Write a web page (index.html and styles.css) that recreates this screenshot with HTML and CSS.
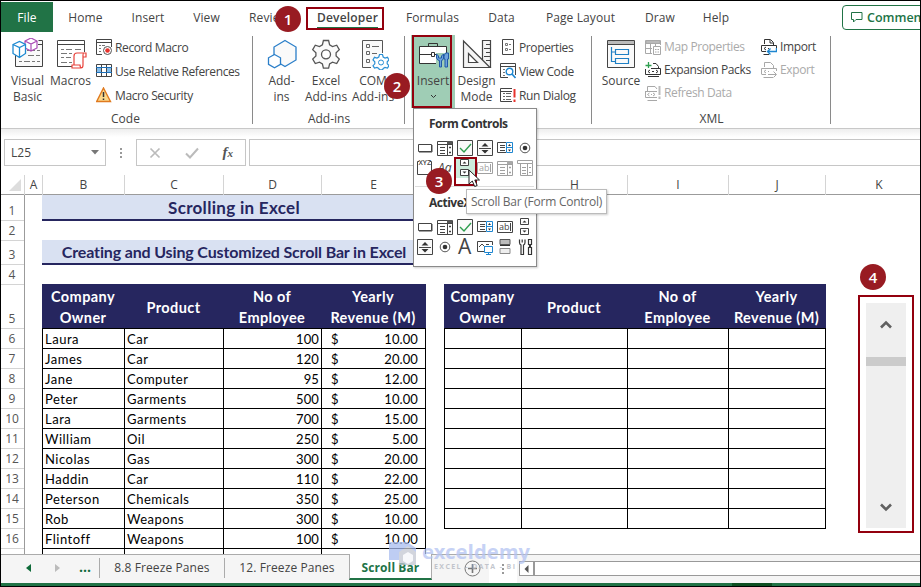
FILE: index.html
```html
<!DOCTYPE html>
<html lang="en">

<head>
    <meta charset="UTF-8">
    <meta name="viewport" content="width=device-width, initial-scale=1.0">
    <title>Scrolling in Excel</title>
    <link rel="stylesheet" href="styles.css">
</head>

<body>
    <div class="window">
        <!-- Ribbon Tabs -->
        <nav class="tabs">
            <span class="tab file">File</span>
            <span class="tab">Home</span>
            <span class="tab">Insert</span>
            <span class="tab">View</span>
            <span class="tab">Review</span>
            <span class="tab active"><b>Developer</b></span>
            <span class="tab">Formulas</span>
            <span class="tab">Data</span>
            <span class="tab">Page Layout</span>
            <span class="tab">Draw</span>
            <span class="tab">Help</span>
            <span class="comments">
                <svg width="12" height="11" viewBox="0 0 12 11"><path d="M1 .5h10v7H5L2.500 10V7.500H.5V.5z" fill="none" stroke="#217346"/></svg>
                Comments
            </span>
        </nav>

        <!-- Ribbon -->
        <div class="ribbon">
            <div class="group code">
                <div class="tools">
                    <div class="big">
                        <svg width="32" height="32" viewBox="0 0 32 32" fill="none">
                            <path d="M3.500 14v14.500h27v-26h-4" stroke="#444" fill="#fafafa"/>
                            <path d="M26 6.500h4" stroke="#444"/>
                            <path d="M15 12.500h3M20 12.500h3M25 12.500h3M16 17.500h6M24 17.500h4M7 23.500h3M12 23.500h6M20 23.500h3M25 23.500h3" stroke="#777"/>
                            <path d="M13 3l6-3 6 3v7l-6 3-6-3zM13 3l6 3 6-3M19 6v7" fill="#fff" stroke="#a94bb5" stroke-width="1.200"/>
                            <path d="M1 6.500l6.500-3 6 3v9l-6 4-6.500-4zM1 6.500l6.500 3 6-3M7.500 9.500v10" fill="#fff" stroke="#1e8ad2" stroke-width="1.300"/>
                        </svg>
                        Visual<br>Basic
                    </div>
                    <div class="big">
                        <svg width="32" height="32" viewBox="0 0 32 32" fill="none">
                            <path d="M17 28.500H2.500v-26h27V14M2.500 6.500h27" stroke="#444"/>
                            <path d="M6 11.500h3M11 11.500h6M20 11.500h6M6 15.500h6M14 15.500h3M6 19.500h3M11 19.500h5M6 24.500h6M14 24.500h3" stroke="#777"/>
                            <path d="M19 27V18q0-3 3-3h9v4h-3v8q0 3-2 3h-9v-3h8q0 3 2 3M28 19v-2q0-2 1-2" stroke="#e8433c" stroke-width="1.200" fill="#fff"/>
                        </svg>
                        Macros
                    </div>
                    <div class="small-col">
                        <div class="small">
                            <svg width="16" height="16" viewBox="0 0 16 16" fill="none"><path d="M6 15.500H.5V.5h15V8M.5 3.500h15" stroke="#444"/><path d="M3 6.500h2M6 6.500h3M3 9.500h2M3 12.500h2" stroke="#777"/><circle cx="11.500" cy="11.500" r="4" stroke="#555" fill="#fff"/><circle cx="11.500" cy="11.500" r="2.300" fill="#e8332c"/></svg>
                            Record Macro
                        </div>
                        <div class="small">
                            <svg width="16" height="16" viewBox="0 0 16 16" fill="none"><path d="M0 4h16v5H0z" fill="#83bdec"/><path d="M5 4h5v5H5z" fill="#fff"/><path d="M.5 1.500h15v12H.5zM5.500 1v13M10.500 1v13" stroke="#444"/><path d="M0 4.500h16M0 9.500h16" stroke="#1e6fb8"/></svg>
                            Use Relative References
                        </div>
                        <div class="small">
                            <svg width="16" height="16" viewBox="0 0 16 16"><path d="M7.500 1L14.500 14.500H.7z" fill="#fbd98b" stroke="#e07a1f" stroke-width="1.400"/><path d="M7.500 5v5M7.500 11.500v1.500" stroke="#333" stroke-width="1.500"/></svg>
                            Macro Security
                        </div>
                    </div>
                </div>
                <div class="label">Code</div>
            </div>

            <div class="group addins">
                <div class="tools">
                    <div class="big">
                        <svg width="32" height="32" viewBox="0 0 32 32" fill="#fafafa" stroke="#2b7fc9" stroke-width="1.300"><path d="M19 2.500l11 6.500v13l-11 6.500L8 22V9z"/><path d="M8.500 16.500l6 3.300v6.500l-6 3.400-6-3.400v-6.500z" fill="#fff"/></svg>
                        Add-<br>ins
                    </div>
                    <div class="big">
                        <svg width="32" height="32" viewBox="0 0 32 32" fill="#fafafa" stroke="#555" stroke-width="1.300"><path d="M13.400 2.500h5.200l1 4.300 2.900 1.700 4.200-1.300 2.600 4.500-3.200 3v3.300l3.200 3-2.600 4.500-4.200-1.300-2.900 1.700-1 4.300h-5.200l-1-4.300-2.900-1.700-4.200 1.300L2.700 21l3.200-3v-3.300l-3.200-3 2.600-4.500 4.200 1.300 2.900-1.700z"/><circle cx="16" cy="16.300" r="4.500" fill="#fff"/></svg>
                        Excel<br>Add-ins
                    </div>
                    <div class="big">
                        <svg width="32" height="32" viewBox="0 0 32 32" fill="none"><path d="M14 29.500H5.500v-27h20V15" stroke="#555" fill="#fafafa"/><path d="M9.500 6.500h3v3h-3zM9.500 13.500h3v3h-3zM9.500 21.500h3v3h-3zM15 8.500h7M15 15.500h5" stroke="#666"/><path d="M22.500 16.500h3l.7 2.500 1.800 1 2.500-.7 1.500 2.600-1.800 1.900v2l1.800 1.900-1.500 2.300-2.500-.6-1.800 1-.7 1.500h-3l-.7-1.500-1.800-1-2.500.6-1.500-2.300 1.800-1.900v-2L16 21.900l1.500-2.600 2.500.7 1.800-1z" stroke="#2b8fd4" stroke-width="1.200" fill="#fff"/><circle cx="24" cy="24.500" r="2.500" stroke="#2b8fd4"/></svg>
                        COM<br>Add-ins
                    </div>
                </div>
                <div class="label">Add-ins</div>
            </div>

            <div class="group controls">
                <div class="tools">
                    <div class="big insert">
                        <svg width="32" height="32" viewBox="0 0 32 32" fill="none"><path d="M11.500 8V5.500h9V8" stroke="#333"/><path d="M2.500 8.500h27v17h-27z" fill="#fff" stroke="#333"/><path d="M3 16.500h26" stroke="#333"/><path d="M14.500 14.500h3v4h-3z" fill="#fff" stroke="#333"/><path d="M19 15h13v15H19z" fill="#9fcdb5"/><path d="M19.500 16v4q1.500 3 3 2.500V29h2v-6.500q2-.5 2-2.500v-4l-2 2v2h-3v-2zM28.500 15h3v6h-1v8h-2.500v-8h-1v-3z" stroke="#2059a8" fill="#6fa3dc"/></svg>
                        Insert
                        <svg class="caret" width="7" height="5" viewBox="0 0 7 5"><path d="M1 1l2.500 2.500L6 1" fill="none" stroke="#333"/></svg>
                    </div>
                    <div class="big design">
                        <svg width="32" height="32" viewBox="0 0 32 32" fill="#f4f4f4" stroke="#444" stroke-width="1.200"><path d="M21.500 2.500h8v27h-8z"/><path d="M25 6.500h4.500M23 10.500h6.500M25 14.500h4.500M23 18.500h6.500M25 22.500h4.500"/><path d="M2.500 3L29 29.500H2.500zM7.500 15.500v9h9z"/></svg>
                        Design<br>Mode
                    </div>
                    <div class="small-col">
                        <div class="small">
                            <svg width="16" height="16" viewBox="0 0 16 16" fill="none"><path d="M2.500.5h11v15h-11z" stroke="#444"/><path d="M5.500 4.500h2v2h-2zM5.500 9.500h2v2h-2zM9 5.500h2M9 10.500h2" stroke="#777"/></svg>
                            Properties
                        </div>
                        <div class="small">
                            <svg width="16" height="16" viewBox="0 0 16 16" fill="none"><path d="M8 14.500H.5V.5h15V12M.5 3.500h15" stroke="#444"/><path d="M3 6.500h2M3 9.500h2M3 12.500h2" stroke="#777"/><circle cx="9.500" cy="8.500" r="3.300" stroke="#1e86d0" stroke-width="1.400" fill="#fff"/><path d="M12 11l3.500 4" stroke="#1e86d0" stroke-width="1.600"/></svg>
                            View Code
                        </div>
                        <div class="small">
                            <svg width="16" height="16" viewBox="0 0 16 16" fill="none"><path d="M12 14.500H.5V1.500H12M.5 4.500H12" stroke="#444"/><path d="M3 6.500h2M6 6.500h5M3 9.500h2M6 9.500h5M3 12.500h2M6 12.500h5" stroke="#666"/><path d="M14.500 2v8.500M14.500 12.500v2.500" stroke="#e8332c" stroke-width="2"/></svg>
                            Run Dialog
                        </div>
                    </div>
                </div>
            </div>

            <div class="group xml">
                <div class="tools">
                    <div class="big">
                        <svg width="32" height="32" viewBox="0 0 32 32" fill="none"><path d="M2.500 2.500h27v27h-27z" stroke="#444" fill="#fafafa"/><path d="M3 3h26v3.500H3z" fill="#bbb"/><path d="M2.500 6.500h27" stroke="#444"/><path d="M10.500 11.500h13v5h-13zM10.500 20.500h13v5h-13zM6.500 9v14.500h4M6.500 14h4" stroke="#1e7fc4" stroke-width="1.200"/></svg>
                        Source
                    </div>
                    <div class="small-col">
                        <div class="small off">
                            <svg width="16" height="16" viewBox="0 0 16 16" fill="none" stroke="#a8a8a8"><path d="M7 14.500H.5V1.500h15V6M.5 4.500h15M5.500 2v12M10.500 2v5M0 9.500h7" /><path d="M1 2h14v2H1z" fill="#ccc"/><path d="M8.500 7.500h7v8h-7zM10 10.500h1.500M10 13h1.500M12.500 10.500H14M12.500 13H14"/></svg>
                            Map Properties
                        </div>
                        <div class="small">
                            <svg width="16" height="16" viewBox="0 0 16 16" fill="none" stroke="#333"><path d="M3.500 0v6M.5 3.500h6" stroke="#2e9e4f" stroke-width="1.300"/><path d="M8 1.500h3l2.500 3V6M.5 7v5.500h15V6.500H6M3 14.500h11"/><path d="M5 8l-2 1.500L5 11M11 8l2 1.500-2 1.500M7 9.500h2"/></svg>
                            Expansion Packs
                        </div>
                        <div class="small off">
                            <svg width="16" height="16" viewBox="0 0 16 16" fill="none" stroke="#a8a8a8"><path d="M2.500 6V1.500H10L12 4M.5 6.500H12M.5 6v6.500H12M2.500 15.500H12M4.500 8l-2 1.500 2 1.500M8 8l2 1.500L8 11M6 9.500h1"/><path d="M14.500 1v9M14.500 11.500V14" stroke-width="2" stroke="#bbb"/></svg>
                            Refresh Data
                        </div>
                    </div>
                    <div class="small-col last">
                        <div class="small">
                            <svg width="16" height="16" viewBox="0 0 16 16" fill="none" stroke="#333"><path d="M3.500 5V.5h6l3 3V6M9 1v3h3M.5 12V6.500h15V9M2.500 15.500H8M.5 12.500H5"/><path d="M5 8L3 9.500 5 11M7 9.500h1"/><path d="M15.500 9v3.500H7M9.500 9.500l-3 3 3 3" stroke="#1e86d0" stroke-width="1.400"/></svg>
                            Import
                        </div>
                        <div class="small off">
                            <svg width="16" height="16" viewBox="0 0 16 16" fill="none" stroke="#a8a8a8"><path d="M3.500 5V.5h6l3 3V6M.5 12V6.500h15V9M2.500 15.500H12M.5 12.500H5M5 8L3 9.500 5 11M7 9.500h1"/><path d="M7 12.500h8M12.500 9.500l3 3-3 3"/></svg>
                            Export
                        </div>
                    </div>
                </div>
                <div class="label">XML</div>
            </div>
        </div>

        <!-- Formula Bar -->
        <div class="formula-bar">
            <div class="name-box">L25 <svg width="8" height="5" viewBox="0 0 8 5"><path d="M0 0h8L4 4.500z" fill="#777"/></svg></div>
            <div class="dots"><i></i><i></i><i></i></div>
            <div class="fx-box">
                <svg width="12" height="12" viewBox="0 0 12 12"><path d="M1.500 1.500l9 9M10.500 1.500l-9 9" stroke="#bbb" stroke-width="1.700"/></svg>
                <svg width="14" height="12" viewBox="0 0 14 12"><path d="M1 6.500l4 4L13 1.500" fill="none" stroke="#bbb" stroke-width="2"/></svg>
                <span class="fx">f<small>x</small></span>
            </div>
            <div class="formula-input"></div>
        </div>

        <!-- Worksheet -->
        <div class="col-heads">
            <span class="corner"><svg width="12" height="12" viewBox="0 0 12 12"><path d="M12 0v12H0z" fill="#ddd"/></svg></span>
            <span>A</span><span>B</span><span>C</span><span>D</span><span>E</span><span>F</span><span>G</span><span>H</span><span>I</span><span>J</span><span>K</span>
        </div>
        <div class="sheet">
            <div class="row-heads">
                <span>1</span><span>2</span><span>3</span><span>4</span><span>5</span><span>6</span><span>7</span><span>8</span><span>9</span><span>10</span><span>11</span><span>12</span><span>13</span><span>14</span><span>15</span><span>16</span><span></span>
            </div>
            <div class="left">
                <div class="title">Scrolling in Excel</div>
                <div class="title sub">Creating and Using Customized Scroll Bar in Excel</div>
                <div class="table source" id="source">
                    <div class="th">Company<br>Owner</div>
                    <div class="th">Product</div>
                    <div class="th">No of<br>Employee</div>
                    <div class="th">Yearly<br>Revenue (M)</div>
                </div>
            </div>
            <div class="table target" id="target">
                <div class="th">Company<br>Owner</div>
                <div class="th">Product</div>
                <div class="th">No of<br>Employee</div>
                <div class="th">Yearly<br>Revenue (M)</div>
            </div>
            <div class="scroll-frame">
                <div class="scroll">
                    <svg width="12" height="9" viewBox="0 0 12 9"><path d="M1 7.500l5-5 5 5" fill="none" stroke="#606060" stroke-width="2.600"/></svg>
                    <div class="thumb"></div>
                    <svg width="12" height="9" viewBox="0 0 12 9"><path d="M1 1.500l5 5 5-5" fill="none" stroke="#606060" stroke-width="2.600"/></svg>
                </div>
            </div>
        </div>

        <!-- Sheet Tabs -->
        <div class="sheet-tabs">
            <div class="nav">
                <svg width="5" height="8" viewBox="0 0 5 8"><path d="M5 0v8L0 4z" fill="#0f6b3a"/></svg>
                <svg width="5" height="8" viewBox="0 0 5 8"><path d="M0 0v8l5-4z" fill="#bbb"/></svg>
                <b>...</b>
            </div>
            <div class="sheet-tab">8.8 Freeze Panes</div>
            <div class="sheet-tab">12. Freeze Panes</div>
            <div class="sheet-tab current">Scroll Bar</div>
            <div class="add"><svg width="17" height="17" viewBox="0 0 17 17"><circle cx="8.500" cy="8.500" r="7.500" fill="none" stroke="#777"/><path d="M8.500 4v9M4 8.500h9" stroke="#777" stroke-width="1.600"/></svg></div>
            <div class="grip"><i></i><i></i><i></i></div>
            <div class="hscroll"><span><svg width="5" height="8" viewBox="0 0 5 8"><path d="M4.500 0v8L.5 4z" fill="#555"/></svg></span></div>
        </div>
        <div class="status"><span></span></div>

        <!-- Insert Menu -->
        <div class="menu">
            <h4>Form Controls</h4>
            <div class="icons">
                <svg><use href="#i-button"/></svg><svg><use href="#i-combo"/></svg><svg><use href="#i-check"/></svg><svg><use href="#i-spin"/></svg><svg><use href="#i-list"/></svg><svg><use href="#i-radio"/></svg>
                <svg><path d="M4 3.500H2.500v13h14v-13H15" fill="none" stroke="#444"/><text x="3.500" y="6.500" class="xyz">XYZ</text></svg><svg><text x="3" y="14" class="aa">Aa</text></svg><svg class="picked"><use href="#i-scroll"/></svg><svg class="grey"><use href="#i-text"/><text x="4" y="13" class="ab">ab</text></svg><svg class="grey"><use href="#i-combo"/></svg><svg class="grey"><use href="#i-drop"/></svg>
            </div>
            <hr>
            <h4>ActiveX Controls</h4>
            <div class="icons activex">
                <svg><use href="#i-button"/></svg><svg><use href="#i-combo"/></svg><svg><use href="#i-check"/></svg><svg><use href="#i-list"/></svg><svg><use href="#i-text"/><text x="4" y="13" class="ab">ab</text></svg><svg><use href="#i-scroll"/></svg>
                <svg><use href="#i-spin"/></svg><svg><use href="#i-radio"/></svg><svg><text x="3" y="17" class="big-a">A</text></svg><svg><use href="#i-image"/></svg><svg><use href="#i-toggle"/></svg><svg><use href="#i-tools"/></svg>
            </div>
        </div>
        <div class="tooltip">Scroll Bar (Form Control)</div>

        <!-- Step Markers -->
        <div class="frame frame-1"></div>
        <div class="frame frame-2"></div>
        <div class="frame frame-3"></div>
        <div class="step step-1">1</div>
        <div class="step step-2">2</div>
        <div class="step step-3">3</div>
        <div class="step step-4">4</div>
        <svg class="cursor" width="13" height="19" viewBox="0 0 13 19"><path d="M1 1v14l3.300-3 2.400 5.500 2.500-1L6.800 11H11.500z" fill="#fff" stroke="#222"/></svg>

        <div class="watermark">
            <svg width="28" height="25" viewBox="0 0 28 25"><path d="M0 0h18l9 6v12H0z" fill="#a9bdf0"/><path d="M10 10l9-6 8 6v13H10z" fill="#c3c8d2"/><path d="M14 13l5-3 5 3v6l-5 3-5-3z" fill="#f5f6fa"/></svg>
            <div>
                <p>exceldemy</p>
                <small>EXCEL - DATA - BI</small>
            </div>
        </div>
    </div>

    <!-- Control Icons -->
    <svg class="defs">
        <symbol id="i-button" viewBox="0 0 20 20"><path d="M3.500 6.500h13v7h-13z" fill="#fff" stroke="#444"/><path d="M4 14h13V7" fill="none" stroke="#444"/></symbol>
        <symbol id="i-combo" viewBox="0 0 20 20"><path d="M2.500 3.500h15v14h-15zM12.500 3v14M3 6.500h14" fill="none" stroke="#444"/><path d="M5 9.500h5M5 12.500h5M5 15.500h5M14 9.500h2M14 14.500h2M15 8.500v2M15 13.500v2" stroke="#444"/><path d="M12 3h5v3h-5z" fill="#555"/></symbol>
        <symbol id="i-check" viewBox="0 0 20 20"><path d="M2.500 2.500h15v15h-15z" fill="#fafafa" stroke="#444"/><path d="M5 10l4 4 7-8" fill="none" stroke="#2e9e4f" stroke-width="1.400"/></symbol>
        <symbol id="i-spin" viewBox="0 0 20 20"><path d="M2.500 2.500h15v15h-15zM4 10.500h12" fill="#fafafa" stroke="#444"/><path d="M6.500 8.500L10 5l3.500 3.500zM6.500 12L10 15.500l3.500-3.500z" fill="#333"/></symbol>
        <symbol id="i-list" viewBox="0 0 20 20"><path d="M11 4.500H2.500v10H11M5 7.500h5M5 9.500h5M5 12.500h5" fill="none" stroke="#444"/><path d="M11.500 4.500h6v10h-6zM11.500 9.500h6" fill="#fff" stroke="#1e86d0"/><path d="M13 8l1.500-2L16 8zM13 11.500l1.500 2 1.500-2z" fill="#333"/></symbol>
        <symbol id="i-radio" viewBox="0 0 20 20"><circle cx="10" cy="10" r="4.800" fill="none" stroke="#555"/><circle cx="10" cy="10" r="2.300" fill="#333"/></symbol>
        <symbol id="i-scroll" viewBox="0 0 20 20"><path d="M5.500 1.500h8v6h-8zM5.500 11.500h8v6h-8z" fill="#fff" stroke="#444"/><path d="M7.500 5.500l2-2 2 2zM7.500 13.500l2 2 2-2z" fill="#333"/></symbol>
        <symbol id="i-text" viewBox="0 0 20 20"><path d="M2.500 4.500h15v11h-15z" fill="none" stroke="#444"/><path d="M15.500 6v8" stroke="#444"/></symbol>
        <symbol id="i-drop" viewBox="0 0 20 20"><path d="M2.500 2.500h15v3h-15zM5.500 5.500v12h12v-12M12.500 6v12M7 9.500h4M7 12.500h4M7 15.500h4M14 9.500h2M14 14.500h2" fill="none" stroke="#444"/></symbol>
        <symbol id="i-image" viewBox="0 0 20 20"><path d="M9 14.500H2.500v-10h15V8M4 10l3-3 3 3M11 7.500h3" fill="none" stroke="#444"/><path d="M9.500 9.500h8v6h-8zM13.500 15.500v2M11 17.500h5" fill="#fff" stroke="#1e86d0"/></symbol>
        <symbol id="i-toggle" viewBox="0 0 20 20"><path d="M5 2.500h10v5H5z" fill="#bbb" stroke="#555"/><path d="M5 8.500h10" stroke="#333"/><path d="M5 11.500h10v5H5z" fill="#eee" stroke="#888"/></symbol>
        <symbol id="i-tools" viewBox="0 0 20 20"><path d="M4.500 2.500v3q0 2 1.500 2.500v9.500h2.500V8Q10 7.500 10 5.500v-3M7.200 2.500v3M13.500 2.500h3v5h-3zM14.500 7.500v3h1v-3M13.500 10.500h3v7h-3z" fill="none" stroke="#333" stroke-width="1.200"/></symbol>
    </svg>

    <script>
        const rows = [
            ["Laura", "Car", "100", "10.00"],
            ["James", "Car", "120", "20.00"],
            ["Jane", "Computer", "95", "12.00"],
            ["Peter", "Garments", "500", "10.00"],
            ["Lara", "Garments", "700", "15.00"],
            ["William", "Oil", "250", "5.00"],
            ["Nicolas", "Gas", "300", "20.00"],
            ["Haddin", "Car", "110", "22.00"],
            ["Peterson", "Chemicals", "350", "25.00"],
            ["Rob", "Weapons", "300", "10.00"],
            ["Flintoff", "Weapons", "100", "10.00"],
            ["", "", "", ""]
        ];

        // Fill the source table
        document.getElementById("source").insertAdjacentHTML("beforeend", rows.map(([owner, product, count, revenue]) =>
            `<div class="td">${owner}</div><div class="td">${product}</div><div class="td num">${count}</div><div class="td money">${revenue ? `<span>$</span><span>${revenue}</span>` : ""}</div>`
        ).join(""));

        // Empty rows of the scrolling table
        document.getElementById("target").insertAdjacentHTML("beforeend", '<div class="td"></div>'.repeat(40));
    </script>
</body>

</html>
```
FILE: styles.css
```css
/* General Styles */
* {
    margin: 0;
    padding: 0;
    box-sizing: border-box;
}

body {
    font-family: "Open Sans", "Noto Sans", sans-serif;
    font-size: 12px;
    color: #444;
    background: #fff;
    overflow: hidden;
}

svg {
    flex: none;
    display: block;
}

.defs {
    position: absolute;
    width: 0;
    height: 0;
}

.window {
    position: relative;
    display: flex;
    flex-direction: column;
    width: 921px;
    height: 587px;
    border: 1px solid #000;
    overflow: hidden;
}

/* Ribbon Tabs */
.tabs {
    display: grid;
    grid-template-columns: 52px 65px 60px 57px 68px 89px 81px 57px 101px 58px 54px 1fr;
    flex: none;
    height: 32px;
    padding-top: 1px;
}

.tab {
    height: 30px;
    line-height: 31px;
    text-align: center;
    white-space: nowrap;
    letter-spacing: 0.1px;
}

.file {
    background: #217346;
    color: #fff;
}

.active b {
    display: inline-block;
    height: 27px;
    font-weight: 600;
    border-bottom: 2px solid #217346;
    letter-spacing: 0.2px;
}

.comments {
    display: flex;
    align-items: center;
    gap: 4px;
    width: 100px;
    height: 25px;
    margin: 3px 0 0 99px;
    padding-left: 8px;
    border: 1px solid #217346;
    border-radius: 4px;
    color: #217346;
    font-weight: 600;
    font-size: 12.5px;
}

/* Ribbon */
.ribbon {
    display: flex;
    flex: none;
    height: 96px;
    border-bottom: 1px solid #c8c8c8;
}

.group {
    position: relative;
    display: flex;
    flex-direction: column;
    padding-top: 2px;
}

.group::after {
    content: "";
    position: absolute;
    right: 0;
    top: 3px;
    width: 1px;
    height: 88px;
    background: #8a8a8a;
}

.code {
    width: 252px;
}

.addins {
    width: 152px;
}

.controls {
    width: 187px;
}

.xml {
    width: 239px;
}

.tools {
    display: flex;
    height: 76px;
}

.code .tools {
    padding-left: 5px;
}

.addins .tools {
    padding-left: 7px;
}

.controls .tools {
    padding-left: 6px;
}

.xml .tools {
    padding-left: 6px;
}

.big {
    display: flex;
    flex: none;
    flex-direction: column;
    align-items: center;
    width: 43px;
    padding-top: 3px;
    line-height: 16px;
    text-align: center;
    white-space: nowrap;
}

.big svg {
    margin-bottom: 3px;
}

.addins .big + .big {
    width: 46px;
}

.addins .big + .big + .big {
    width: 48px;
}

.insert {
    width: 44px;
    height: 73px;
    background: #9fcdb5;
}

.big .caret {
    margin: 5px 0 0;
}

.xml .big {
    width: 46px;
}

.small-col {
    padding-left: 4px;
}

.controls .small-col {
    padding-left: 2px;
}

.xml .small-col {
    width: 116px;
    padding-left: 1px;
}

.xml .small-col.last {
    width: auto;
}

.small {
    display: flex;
    align-items: center;
    gap: 3px;
    height: 24px;
    white-space: nowrap;
    letter-spacing: -0.38px;
}

.xml .small {
    height: 23px;
}

.off {
    color: #aaa;
}

.label {
    line-height: 18px;
    text-align: center;
}

.code .label {
    padding-right: 3px;
}

/* Formula Bar */
.formula-bar {
    display: flex;
    flex: none;
    height: 46px;
    padding: 10px 0 9px 3px;
    background: linear-gradient(#eee, #fff 8px);
}

.name-box,
.fx-box,
.formula-input {
    display: flex;
    align-items: center;
    border: 1px solid #c6c6c6;
}

.name-box {
    justify-content: space-between;
    width: 102px;
    padding: 0 6px;
}

.dots {
    display: flex;
    flex-direction: column;
    align-items: center;
    justify-content: center;
    gap: 2px;
    width: 30px;
}

.dots i,
.grip i {
    width: 2px;
    height: 2px;
    background: #999;
}

.fx-box {
    justify-content: space-between;
    width: 110px;
    padding: 0 12px;
}

.fx {
    font: italic bold 15px "Liberation Serif", serif;
    color: #555;
}

.fx small {
    font-size: 11px;
}

.formula-input {
    flex: 1;
    margin-left: 3px;
    border-right: 0;
}

/* Worksheet */
.col-heads {
    display: grid;
    grid-template-columns: 24px 18px 82px 99px 98px 104px 19px 77px 106px 101px 97px 1fr;
    flex: none;
    height: 20px;
    border-bottom: 1px solid #9b9b9b;
    font-size: 12px;
    line-height: 20px;
    text-align: center;
}

.col-heads span {
    border-right: 1px solid #d4d4d4;
}

.col-heads span:last-child {
    border-right: 0;
    padding-left: 12px;
}

.corner {
    padding: 4px 0 0 8px;
}

.sheet {
    display: flex;
    height: 359px;
    overflow: hidden;
    font-family: Lato, "Open Sans", sans-serif;
    font-size: 13px;
    color: #000;
}

.row-heads {
    display: grid;
    grid-template-rows: 26px 20px 24px 20px 44px repeat(12, 20px);
    width: 24px;
    border-right: 1px solid #9b9b9b;
    font: 12px "Open Sans", sans-serif;
    color: #555;
}

.row-heads span {
    display: flex;
    align-items: flex-end;
    justify-content: center;
    padding-right: 1px;
    line-height: 18px;
    border-bottom: 1px solid #d4d4d4;
}

.left {
    width: 384px;
    margin-left: 17px;
}

.title {
    height: 26px;
    line-height: 25px;
    background: #d9e1f2;
    border-bottom: 2px solid #26265f;
    color: #26265f;
    font-size: 17px;
    font-weight: bold;
    letter-spacing: 0.3px;
    text-align: center;
    white-space: nowrap;
}

.sub {
    height: 25px;
    margin: 19px 0;
    line-height: 24px;
    font-size: 16px;
    letter-spacing: -0.15px;
}

.table {
    display: grid;
    align-content: start;
    border-right: 1px solid #000;
}

.source {
    grid-template-columns: 82px 99px 98px 104px;
}

.target {
    grid-template-columns: 77px 106px 101px 97px;
    width: 382px;
    height: 245px;
    margin: 89px 0 0 18px;
    border-bottom: 1px solid #000;
}

.th {
    display: flex;
    align-items: center;
    justify-content: center;
    height: 44px;
    padding-top: 2px;
    background: #26265f;
    color: #fff;
    font-size: 14.5px;
    font-weight: bold;
    letter-spacing: 0.4px;
    line-height: 21px;
    text-align: center;
    white-space: nowrap;
    box-shadow: 1px 0 #26265f;
}

.td {
    height: 20px;
    padding: 0 2px;
    line-height: 20px;
    border-left: 1px solid #000;
    border-top: 1px solid #000;
    letter-spacing: 0.5px;
}

.num,
.money {
    letter-spacing: 0.1px;
}

.num {
    text-align: right;
}

.money {
    display: flex;
    justify-content: space-between;
    padding: 0 7px 0 9px;
}

/* Scroll Bar Control */
.scroll-frame {
    width: 56px;
    height: 238px;
    margin: 100px 0 0 32px;
    padding: 6px;
    border: 2px solid #93000e;
}

.scroll {
    display: flex;
    flex-direction: column;
    align-items: center;
    width: 40px;
    height: 225px;
    padding: 17px 0 16px;
    background: #efefef;
}

.thumb {
    width: 40px;
    height: 9px;
    margin: 28px 0 auto;
    background: #cbcbcb;
}

/* Sheet Tabs */
.sheet-tabs {
    display: flex;
    flex: none;
    height: 29px;
    background: #f5f5f5;
    border-top: 1px solid #ababab;
}

.nav {
    display: flex;
    align-items: center;
    width: 99px;
    padding-left: 25px;
    border-right: 1px solid #ababab;
    margin: 3px 0 5px;
}

.nav svg + svg {
    margin-left: 24px;
}

.nav b {
    margin: -4px 0 0 19px;
    color: #0f6b3a;
    font-size: 14px;
}

.sheet-tab {
    width: 125px;
    margin: 3px 0 5px;
    line-height: 20px;
    text-align: center;
    border-right: 1px solid #ababab;
    white-space: nowrap;
    letter-spacing: 0.1px;
}

.sheet-tab + .sheet-tab {
    width: 124px;
    border-right: 0;
}

.sheet-tab.current {
    width: 83px;
    margin: -1px 0 3px;
    padding-top: 4px;
    background: #fff;
    border-left: 1px solid #ababab;
    border-right: 1px solid #ababab;
    border-bottom: 2px solid #217346;
    color: #217346;
    font-weight: bold;
}

.sheet-tabs .sheet-tab.current {
    width: 83px;
}

.add {
    width: 57px;
    padding: 5px 0 0 32px;
}

.grip {
    display: flex;
    flex-direction: column;
    align-items: center;
    justify-content: center;
    gap: 2px;
    width: 28px;
    background: #fff;
}

.hscroll {
    flex: 1;
    height: 15px;
    margin: 6px 0 0 2px;
    background: #fff;
    border: 1px solid #999;
    border-right: 0;
}

.hscroll span {
    display: block;
    width: 15px;
    height: 13px;
    padding: 3px 0 0 4px;
    border-right: 2px solid #999;
}

.status {
    flex: none;
    height: 3px;
    padding-left: 731px;
    background: #217346;
}

.status span {
    display: block;
    width: 40px;
    height: 3px;
    background: #0e4f22;
}

/* Insert Menu */
.menu {
    position: absolute;
    left: 412px;
    top: 107px;
    width: 124px;
    height: 159px;
    padding: 6px 0 0 1px;
    background: #fff;
    border: 1px solid #8a8a8a;
    box-shadow: 1px 1px 2px rgba(0, 0, 0, 0.2);
}

.menu h4 {
    padding-left: 14px;
    font-size: 12px;
    line-height: 18px;
    color: #333;
    letter-spacing: -0.5px;
}

.menu hr {
    height: 1px;
    margin: 8px 2px 7px 0;
    border: 0;
    background: #ddd;
}

.icons {
    display: grid;
    grid-template-columns: repeat(6, 20px);
    padding-top: 5px;
}

.icons svg {
    width: 20px;
    height: 20px;
}

.icons .picked {
    background: #cdebdc;
}

.grey {
    opacity: 0.5;
}

.icons text {
    fill: #444;
}

.aa {
    font: italic 12px "Open Sans", sans-serif;
}

.big-a {
    font: 21px "Open Sans", sans-serif;
}

.xyz {
    font: 600 7px "Open Sans", sans-serif;
}

.ab {
    font: 9px "Open Sans", sans-serif;
}

.tooltip {
    position: absolute;
    left: 465px;
    top: 188px;
    width: 141px;
    height: 25px;
    background: #fff;
    border: 1px solid #bbb;
    box-shadow: 1px 1px 2px rgba(0, 0, 0, 0.2);
    color: #666;
    line-height: 23px;
    text-align: center;
    white-space: nowrap;
    letter-spacing: -0.25px;
}

/* Step Markers */
.frame {
    position: absolute;
    border: 2px solid #93000e;
}

.frame-1 {
    left: 305px;
    top: 6px;
    width: 78px;
    height: 23px;
}

.frame-2 {
    left: 411px;
    top: 34px;
    width: 40px;
    height: 73px;
}

.frame-3 {
    left: 453px;
    top: 156px;
    width: 23px;
    height: 29px;
}

.step {
    position: absolute;
    width: 26px;
    height: 26px;
    border-radius: 50%;
    background: #981b22;
    color: #fff;
    font: 600 15px/26px "Open Sans", sans-serif;
    text-align: center;
}

.step-1 {
    left: 274px;
    top: 5px;
}

.step-2 {
    left: 383px;
    top: 72px;
}

.step-3 {
    left: 425px;
    top: 167px;
}

.step-4 {
    left: 859px;
    top: 263px;
}

.cursor {
    position: absolute;
    left: 467px;
    top: 168px;
}

/* Watermark */
.watermark {
    position: absolute;
    left: 388px;
    top: 541px;
    display: flex;
    gap: 5px;
    opacity: 0.75;
}

.watermark p {
    font: bold 20px/20px "Noto Sans", sans-serif;
    letter-spacing: 0.2px;
    color: #b3c3f2;
}

.watermark small {
    display: block;
    padding-left: 12px;
    font-size: 7px;
    font-weight: bold;
    line-height: 10px;
    letter-spacing: 1.4px;
    color: #b0b4be;
    white-space: nowrap;
}
```
